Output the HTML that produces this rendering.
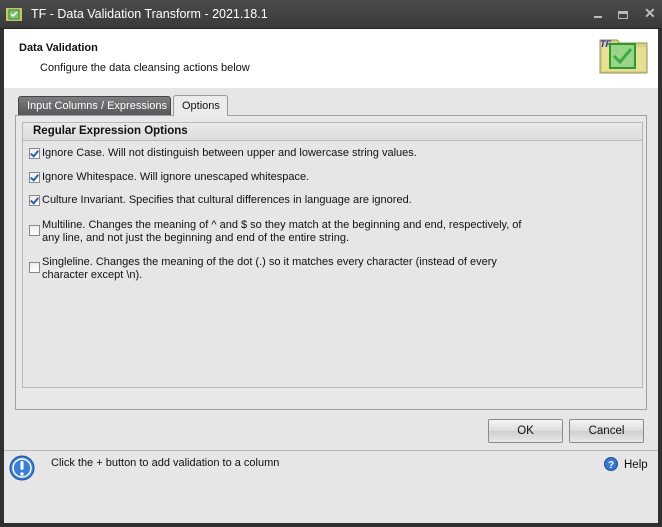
<!DOCTYPE html>
<html><head><style>
*{margin:0;padding:0;box-sizing:border-box}
body{width:662px;height:527px;background:#2f3031;font-family:"Liberation Sans",Tahoma,sans-serif;font-size:11px;color:#111;position:relative;overflow:hidden}
.a{position:absolute;white-space:nowrap}
.title{left:0;top:0;width:662px;height:29px;background:linear-gradient(#4a4b4d,#393a3c);border-bottom:1px solid #222}
.client{left:4px;top:29px;width:654px;height:494px;background:#e6e6e6}
.hdr{left:4px;top:29px;width:654px;height:59px;background:#fff}
.cb{width:11px;height:11px;border:1px solid #888;background:linear-gradient(#eee,#fff);}
.cb.on::after{content:"";position:absolute;left:2px;top:0px;width:3px;height:6px;border:solid #2a5fb0;border-width:0 2px 2px 0;transform:rotate(40deg)}
.btn{height:24px;border:1px solid #8a8a8a;border-radius:2px;background:linear-gradient(#f4f4f4,#dcdcdc 50%,#cfcfcf 51%,#e8e8e8);text-align:center;line-height:22px;font-size:11.5px}
</style></head><body>
<div class="a title"></div>
<svg class="a" style="left:6px;top:8px" width="16" height="13"><rect x="0" y="0" width="16" height="13" fill="#c9c26a"/><rect x="3" y="2" width="10" height="9" fill="#7fc07a" stroke="#2c8f2c"/><path d="M5 6l2 2 4-4" stroke="#fff" stroke-width="1.5" fill="none"/></svg>
<div class="a" style="left:31px;top:7px;color:#fff;font-size:12.5px">TF - Data Validation Transform - 2021.18.1</div>
<div class="a" style="left:594px;top:16px;width:8px;height:2px;background:#bbb"></div>
<div class="a" style="left:618px;top:11px;width:10px;height:8px;border:1px solid #bbb;border-top-width:3px"></div>
<div class="a" style="left:644px;top:5px;color:#bbb;font-size:14px;font-weight:bold">✕</div>
<div class="a client"></div>
<div class="a hdr"></div>
<div class="a" style="left:19px;top:42px;font-weight:bold;font-size:11px">Data Validation</div>
<div class="a" style="left:40px;top:62px">Configure the data cleansing actions below</div>
<svg class="a" style="left:599px;top:37px" width="50" height="37"><path d="M1 3h17l3 3h27v30H1z" fill="#d6cf84" stroke="#9a9350"/><rect x="3" y="10" width="44" height="24" fill="#e6df94"/><rect x="11" y="7" width="25" height="24" fill="#9ad38a" stroke="#2d9a2d" stroke-width="2"/><path d="M15 19l6 6 11-13" stroke="#3cae3c" stroke-width="3" fill="none"/><text x="1" y="10" font-size="9" font-style="italic" font-weight="bold" fill="#3030c0" font-family="Liberation Sans">TF</text></svg>
<div class="a" style="left:18px;top:96px;width:153px;height:20px;background:linear-gradient(#7c7d7f,#55575a);border:1px solid #444;border-radius:3px 3px 0 0;color:#fff;padding:3px 0 0 8px">Input Columns / Expressions</div>
<div class="a" style="left:173px;top:95px;width:55px;height:21px;background:#ebebeb;border:1px solid #999;border-bottom:none;border-radius:3px 3px 0 0;padding:4px 0 0 8px;z-index:2">Options</div>
<div class="a" style="left:15px;top:115px;width:632px;height:295px;border:1px solid #a0a0a0;background:#e8e8e8"></div>
<div class="a" style="left:22px;top:122px;width:621px;height:266px;border:1px solid #b8b8b8;background:#e6e6e6"></div>
<div class="a" style="left:23px;top:123px;width:619px;height:18px;background:linear-gradient(#eaeaea,#dcdcdc);border-bottom:1px solid #bbb"></div>
<div class="a" style="left:33px;top:125px;font-weight:bold;font-size:11.5px">Regular Expression Options</div>
<div class="a cb on" style="left:29px;top:148px"></div><div class="a" style="left:42px;top:147px">Ignore Case. Will not distinguish between upper and lowercase string values.</div>
<div class="a cb on" style="left:29px;top:172px"></div><div class="a" style="left:42px;top:171px">Ignore Whitespace. Will ignore unescaped whitespace.</div>
<div class="a cb on" style="left:29px;top:195px"></div><div class="a" style="left:42px;top:194px">Culture Invariant. Specifies that cultural differences in language are ignored.</div>
<div class="a cb" style="left:29px;top:225px"></div><div class="a" style="left:42px;top:219px;line-height:13px">Multiline. Changes the meaning of ^ and $ so they match at the beginning and end, respectively, of<br>any line, and not just the beginning and end of the entire string.</div>
<div class="a cb" style="left:29px;top:262px"></div><div class="a" style="left:42px;top:256px;line-height:13px">Singleline. Changes the meaning of the dot (.) so it matches every character (instead of every<br>character except \n).</div>
<div class="a btn" style="left:488px;top:419px;width:75px">OK</div>
<div class="a btn" style="left:569px;top:419px;width:75px">Cancel</div>
<div class="a" style="left:4px;top:450px;width:654px;height:1px;background:#b8b8b8"></div>
<svg class="a" style="left:9px;top:455px" width="26" height="26"><circle cx="13" cy="13" r="12" fill="#3b7fd6" stroke="#1f4f9a"/><circle cx="13" cy="13" r="9" fill="none" stroke="#fff" stroke-width="1.5"/><rect x="11.5" y="6" width="3" height="9" rx="1.5" fill="#fff"/><circle cx="13" cy="19" r="1.7" fill="#fff"/></svg>
<div class="a" style="left:51px;top:457px">Click the + button to add validation to a column</div>
<svg class="a" style="left:604px;top:457px" width="14" height="14"><circle cx="7" cy="7" r="6.5" fill="#3a78d0" stroke="#1f4f9a"/><text x="7" y="11" font-size="10" font-weight="bold" text-anchor="middle" fill="#fff" font-family="Liberation Sans">?</text></svg>
<div class="a" style="left:624px;top:459px;font-size:11.5px">Help</div>
</body></html>
